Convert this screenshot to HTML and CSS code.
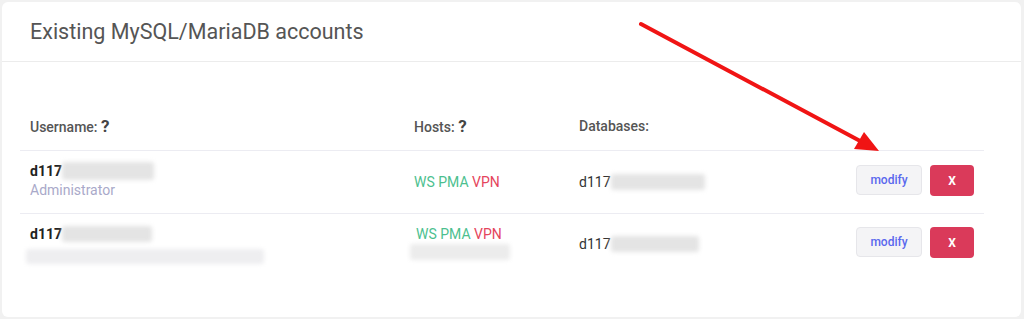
FILE: index.html
```html
<!DOCTYPE html>
<html lang="en">
<head>
    <meta charset="UTF-8">
    <title>MySQL accounts</title>
    <link rel="stylesheet" href="styles.css">
</head>
<body>

<div class="card">
    <div class="card-head">
        <h2>Existing MySQL/MariaDB accounts</h2>
    </div>

    <div class="card-body">
        <div class="accounts">
            <div class="row head-row">
                <div class="cell">Username: <span class="help">?</span></div>
                <div class="cell">Hosts: <span class="help">?</span></div>
                <div class="cell">Databases:</div>
                <div class="cell"></div>
            </div>

            <div class="row">
                <div class="cell user-cell">
                    <div class="user">d117<span class="blur blur-user"></span></div>
                    <div class="role">Administrator</div>
                </div>
                <div class="cell hosts">
                    <span class="ok">WS</span> <span class="ok">PMA</span> <span class="off">VPN</span>
                </div>
                <div class="cell db">d117<span class="blur blur-db"></span></div>
                <div class="cell actions">
                    <button class="modify-btn">modify</button>
                    <button class="delete-btn">X</button>
                </div>
            </div>

            <div class="row last">
                <div class="cell">
                    <div class="user">d117<span class="blur blur-user2"></span></div>
                    <div class="blur blur-note"></div>
                </div>
                <div class="cell hosts shifted">
                    <div><span class="ok">WS</span> <span class="ok">PMA</span> <span class="off">VPN</span></div>
                    <div class="blur blur-host"></div>
                </div>
                <div class="cell db">d117<span class="blur blur-db2"></span></div>
                <div class="cell actions">
                    <button class="modify-btn">modify</button>
                    <button class="delete-btn">X</button>
                </div>
            </div>
        </div>
    </div>
</div>

<!-- annotation arrow pointing at the modify button -->
<svg class="arrow" width="1024" height="319" viewBox="0 0 1024 319">
    <line x1="641" y1="24" x2="862" y2="142" stroke="#f01414" stroke-width="4" stroke-linecap="round"/>
    <polygon points="879,151 854,149 864,132" fill="#f01414"/>
</svg>

</body>
</html>
```

FILE: styles.css
```css
body {
    margin: 0;
    padding: 0;
    background: #f1f1f1;
    font-family: Roboto, 'Liberation Sans', sans-serif;
    color: #333;
}

.card {
    margin: 2px 3px 2px 2px;
    height: 315px;
    background: #fff;
    border-radius: 6px;
    box-sizing: border-box;
}

.card-head {
    height: 59px;
    padding-left: 28px;
    border-bottom: 1px solid #ececec;
    display: flex;
    align-items: center;
}

.card-head h2 {
    margin: 0;
    font-size: 21.5px;
    font-weight: 400;
    color: #555;
}

.card-body {
    padding: 40px 37px 0 18px;
}

.row {
    display: grid;
    grid-template-columns: 384px 165px 1fr auto;
    align-items: center;
    height: 62px;
    border-bottom: 1px solid #ececf2;
}

.row.head-row {
    height: 48px;
    font-size: 14px;
    font-weight: 500;
    color: #555;
}

.row.last {
    border-bottom: none;
    height: 60px;
}

.cell {
    padding-left: 10px;
    font-size: 14px;
}

.user-cell {
    padding-bottom: 5px;
}

.help {
    font-weight: 700;
    font-size: 17px;
    color: #444;
}

.user {
    font-weight: 700;
    color: #222;
    display: flex;
    align-items: center;
    height: 20px;
}

.role {
    color: #a9a9c9;
    margin-top: 1px;
}

.hosts .ok {
    color: #4cbf8f;
}

.hosts .off {
    color: #e5455c;
}

.hosts.shifted {
    padding-left: 12px;
    padding-bottom: 2px;
}

.db {
    display: flex;
    align-items: center;
    color: #333;
}

.blur {
    display: inline-block;
    background: #e4e4e4;
    filter: blur(2px);
    border-radius: 3px;
}

.blur-user { width: 92px; height: 18px; }
.blur-user2 { width: 90px; height: 16px; }
.blur-db { width: 94px; height: 16px; }
.blur-db2 { width: 88px; height: 16px; }

.blur-note {
    display: block;
    width: 238px;
    height: 15px;
    margin: 5px 0 0 -4px;
    background: #eeeef0;
}

.blur-host {
    display: block;
    width: 100px;
    height: 16px;
    margin: 2px 0 0 -6px;
    background: #ececec;
}

.actions {
    display: flex;
    gap: 8px;
    padding-right: 10px;
    padding-bottom: 3px;
}

.modify-btn {
    width: 66px;
    height: 30px;
    background: #f4f4f6;
    border: 1px solid #e6e6ea;
    border-radius: 4px;
    color: #5a68ee;
    font-family: Roboto, 'Liberation Sans', sans-serif;
    font-size: 12px;
    font-weight: 500;
}

.delete-btn {
    width: 44px;
    height: 31px;
    background: #da3a5a;
    border: none;
    border-radius: 4px;
    color: #fff;
    font-family: Roboto, 'Liberation Sans', sans-serif;
    font-size: 12px;
    font-weight: 700;
}

.arrow {
    position: absolute;
    left: 0;
    top: 0;
    pointer-events: none;
}
```
